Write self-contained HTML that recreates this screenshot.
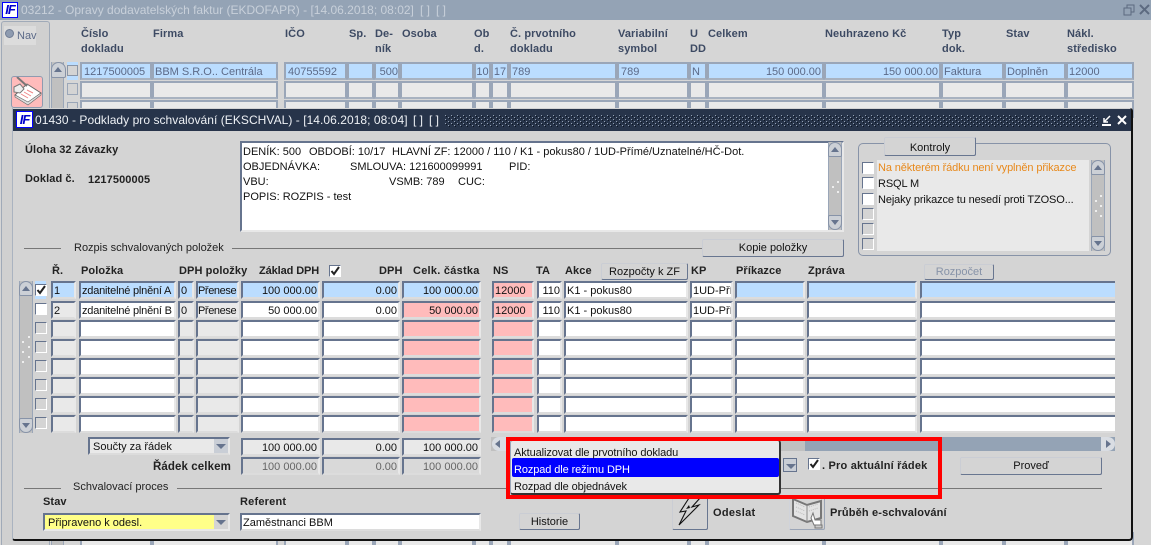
<!DOCTYPE html>
<html><head><meta charset="utf-8">
<style>
html,body{margin:0;padding:0;width:1151px;height:545px;overflow:hidden}
body{background:#d6d6d6;font:11px/18px "Liberation Sans",Arial,sans-serif;color:#111}
div,svg,span{position:absolute;box-sizing:border-box}
#root{left:0;top:0;width:1151px;height:545px;overflow:hidden}
.t{white-space:nowrap}
.h{font-weight:bold;white-space:nowrap;color:#222;letter-spacing:.1px}
.bh{font-weight:bold;white-space:nowrap;color:#3d4a63;line-height:15px;letter-spacing:.1px}
.bc{height:18px;border:2px solid #9aa6b8;border-bottom-color:#a8b2c0;background:#e9e9e9;color:#5c6a88;white-space:nowrap;padding:0 1px;line-height:17px;overflow:hidden}
.bb{background:#bbddff}
.r{text-align:right}
.c{height:18px;border:2px solid;border-color:#66748e #e8e8e8 #dcdcdc #66748e;white-space:nowrap;overflow:hidden;padding:0 1px;line-height:17px}
.n{letter-spacing:-.2px}
.m{letter-spacing:-.4px;padding:0}
.w{background:#fff}.g{background:#e9e9e9}.p{background:#ffbbbb}.b{background:#bbddff}.d{background:#d9d9d9;color:#666}
.k1{left:51px;width:25px}.k2{left:79px;width:97px}.k3{left:178px;width:16px}.k4{left:196px;width:43px}.k5{left:241px;width:79px}.k6{left:322px;width:78px}.k7{left:402px;width:79px}.k8{left:492px;width:42px}.k9{left:537px;width:25px}.k10{left:564px;width:124px}.k11{left:690px;width:43px}.k12{left:735px;width:70px}.k13{left:807px;width:110px}.k14{left:920px;width:195px}
.cb{left:35px;width:12px;height:12px;border:1px solid;border-color:#66748e #fff #fff #66748e;background:#d4d4d4}
.cw{background:#fff}
.btn{border:1px solid;border-color:#e8e8e8 #66748e #66748e #e8e8e8;border-radius:2px;background:#d4d4d4;text-align:center;white-space:nowrap;outline:1px solid rgba(110,125,150,.25);outline-offset:-1px}
.sb{background:#c0c0c0;border-left:1px solid #9aa6b8;border-right:1px solid #9aa6b8}
.ub,.db{left:-1px;width:15px;height:15px;background:#ccd0d6;border:1px solid #8793a8}
.ub{top:0;border-radius:8px 8px 2px 2px}.db{bottom:0;border-radius:2px 2px 8px 8px}
.ub:after,.db:after{content:"";position:absolute;left:2px;top:4px;border:4px solid transparent}
.ub:after{border-bottom:5px solid #66748e;border-top:0}
.db:after{border-top:5px solid #66748e;border-bottom:0}
.dot{width:2px;height:2px;background:#eee}
.ln{height:1px;background:#777}
.arr{width:14px;height:14px;background:#c9ced6}
.arr:after{content:"";position:absolute;left:2px;top:5px;border:5px solid transparent;border-top:5px solid #66748e;border-bottom:0}
</style></head>
<body>
<div id="root">
<!-- background window -->
<div style="left:0;top:0;width:1151px;height:20px;background:#94a3b5"></div>
<div style="left:2px;top:2px;width:16px;height:16px;background:#fff;border:1px solid #00f;color:#00c;font:italic bold 13px/14px 'Liberation Sans';text-align:center;letter-spacing:-1px">IF</div>
<div class="t" style="left:21px;top:2px;color:#c8d0da;font-size:12px;line-height:16px">03212 - Opravy dodavatelských faktur (EKDOFAPR) - [14.06.2018; 08:02]</div>
<div class="t" style="left:420px;top:2px;color:#c8d0da;font-size:12px;line-height:16px">[ ]</div>
<div class="t" style="left:436px;top:2px;color:#c8d0da;font-size:12px;line-height:16px">[ ]</div>
<svg style="left:1121px;top:3px" width="30" height="13"><path d="M3 5h7v7H3zM6 5V2h7v7h-3" fill="none" stroke="#5c6a80"/><path d="M19 2l9 9M28 2l-9 9" stroke="#5c6a80" stroke-width="2"/></svg>
<div style="left:1px;top:21px;width:49px;height:530px;border:1px solid #a0aab8;border-bottom:0;border-radius:3px 3px 0 0;background:#d0d0d0"></div>
<div style="left:4px;top:26px;width:32px;height:19px;background:#dcdcdc"></div>
<div style="left:5px;top:29px;width:9px;height:9px;border-radius:50%;background:#8e9bb0;border:1px solid #6f7c94"></div>
<div class="t" style="left:17px;top:27px;color:#5c6a88">Nav</div>
<div class="sb" style="left:51px;top:62px;width:13px;height:490px"><div class="ub" style="height:16px"></div></div>
<div style="left:67px;top:62px;width:11px;height:18px;background:#bbddff"></div>
<div style="left:67px;top:65px;width:11px;height:11px;background:#d4d4d4;border:1px solid #8a96a8"></div>
<div style="left:67px;top:83px;width:11px;height:12px;background:#d4d4d4;border:1px solid #9aa6b8"></div>
<div style="left:67px;top:102px;width:11px;height:12px;background:#d4d4d4;border:1px solid #9aa6b8"></div>
<div style="left:11px;top:76px;width:32px;height:32px;background:#ffbbbb;border:1px solid #8f9bb0;border-radius:3px"></div>
<svg style="left:12px;top:77px" width="30" height="30"><path d="M15 7l14 9-13 10-13-8z" fill="#fff" stroke="#666"/><path d="M16 25l13-9v2L16 28 3 20v-2z" fill="#ddd" stroke="#666" stroke-width=".6"/><path d="M9 17l7 4M12 15l7 4M15 13l6 3" stroke="#e88"/><path d="M5 0l10 9" stroke="#777" stroke-width="2"/><path d="M2 10l6-3 4 5-4 4-6-1z" fill="#eee" stroke="#777"/></svg>

<div class="bh" style="left:81px;top:27px">Číslo<br>dokladu</div>
<div class="bh" style="left:153px;top:27px">Firma</div>
<div class="bh" style="left:285px;top:27px">IČO</div>
<div class="bh" style="left:349px;top:27px">Sp.</div>
<div class="bh" style="left:375px;top:27px">De-<br>ník</div>
<div class="bh" style="left:402px;top:27px">Osoba</div>
<div class="bh" style="left:474px;top:27px">Ob<br>d.</div>
<div class="bh" style="left:510px;top:27px">Č. prvotního<br>dokladu</div>
<div class="bh" style="left:618px;top:27px">Variabilní<br>symbol</div>
<div class="bh" style="left:690px;top:27px">U<br>DD</div>
<div class="bh" style="left:708px;top:27px">Celkem</div>
<div class="bh" style="left:825px;top:27px">Neuhrazeno Kč</div>
<div class="bh" style="left:942px;top:27px">Typ<br>dok.</div>
<div class="bh" style="left:1006px;top:27px">Stav</div>
<div class="bh" style="left:1067px;top:27px">Nákl.<br>středisko</div>

<div class="bc bb" style="left:80px;top:62px;width:72px;padding-left:2px">1217500005</div>
<div class="bc bb" style="left:152px;top:62px;width:126px">BBM S.R.O.. Centrála</div>
<div class="bc bb" style="left:284px;top:62px;width:63px;padding-left:2px">40755592</div>
<div class="bc bb" style="left:347px;top:62px;width:27px"></div>
<div class="bc bb r" style="left:374px;top:62px;width:26px;padding:0">500</div>
<div class="bc bb" style="left:400px;top:62px;width:74px"></div>
<div class="bc bb" style="left:474px;top:62px;width:17px;padding:0;text-align:center">10</div>
<div class="bc bb" style="left:491px;top:62px;width:18px;padding:0;text-align:center">17</div>
<div class="bc bb" style="left:509px;top:62px;width:108px">789</div>
<div class="bc bb" style="left:617px;top:62px;width:72px;padding-left:2px">789</div>
<div class="bc bb" style="left:689px;top:62px;width:18px">N</div>
<div class="bc bb r" style="left:707px;top:62px;width:117px">150 000.00</div>
<div class="bc bb r" style="left:824px;top:62px;width:117px">150 000.00</div>
<div class="bc bb" style="left:941px;top:62px;width:63px">Faktura</div>
<div class="bc bb" style="left:1004px;top:62px;width:62px">Doplněn</div>
<div class="bc bb" style="left:1066px;top:62px;width:68px">12000</div>

<div class="bc" style="left:80px;top:81px;width:72px"></div><div class="bc" style="left:152px;top:81px;width:126px"></div><div class="bc" style="left:284px;top:81px;width:63px"></div><div class="bc" style="left:347px;top:81px;width:27px"></div><div class="bc" style="left:374px;top:81px;width:26px"></div><div class="bc" style="left:400px;top:81px;width:74px"></div><div class="bc" style="left:474px;top:81px;width:17px"></div><div class="bc" style="left:491px;top:81px;width:18px"></div><div class="bc" style="left:509px;top:81px;width:108px"></div><div class="bc" style="left:617px;top:81px;width:72px"></div><div class="bc" style="left:689px;top:81px;width:18px"></div><div class="bc" style="left:707px;top:81px;width:117px"></div><div class="bc" style="left:824px;top:81px;width:117px"></div><div class="bc" style="left:941px;top:81px;width:63px"></div><div class="bc" style="left:1004px;top:81px;width:62px"></div><div class="bc" style="left:1066px;top:81px;width:68px"></div>
<div class="bc" style="left:80px;top:100px;width:72px"></div><div class="bc" style="left:152px;top:100px;width:126px"></div><div class="bc" style="left:284px;top:100px;width:63px"></div><div class="bc" style="left:347px;top:100px;width:27px"></div><div class="bc" style="left:374px;top:100px;width:26px"></div><div class="bc" style="left:400px;top:100px;width:74px"></div><div class="bc" style="left:474px;top:100px;width:17px"></div><div class="bc" style="left:491px;top:100px;width:18px"></div><div class="bc" style="left:509px;top:100px;width:108px"></div><div class="bc" style="left:617px;top:100px;width:72px"></div><div class="bc" style="left:689px;top:100px;width:18px"></div><div class="bc" style="left:707px;top:100px;width:117px"></div><div class="bc" style="left:824px;top:100px;width:117px"></div><div class="bc" style="left:941px;top:100px;width:63px"></div><div class="bc" style="left:1004px;top:100px;width:62px"></div><div class="bc" style="left:1066px;top:100px;width:68px"></div>
<div class="bc" style="left:80px;top:532px;width:72px"></div><div class="bc" style="left:152px;top:532px;width:126px"></div><div class="bc" style="left:284px;top:532px;width:63px"></div><div class="bc" style="left:347px;top:532px;width:27px"></div><div class="bc" style="left:374px;top:532px;width:26px"></div><div class="bc" style="left:400px;top:532px;width:74px"></div><div class="bc" style="left:474px;top:532px;width:17px"></div><div class="bc" style="left:491px;top:532px;width:18px"></div><div class="bc" style="left:509px;top:532px;width:108px"></div><div class="bc" style="left:617px;top:532px;width:72px"></div><div class="bc" style="left:689px;top:532px;width:18px"></div><div class="bc" style="left:707px;top:532px;width:117px"></div><div class="bc" style="left:824px;top:532px;width:117px"></div><div class="bc" style="left:941px;top:532px;width:63px"></div><div class="bc" style="left:1004px;top:532px;width:62px"></div><div class="bc" style="left:1066px;top:532px;width:68px"></div>

<!-- modal -->
<div style="left:12px;top:108px;width:1121px;height:433px;background:#d4d4d4;border-right:2px solid #111;border-bottom:2px solid #111;border-left:1px solid #aab3c0;border-radius:0 3px 4px 3px"></div>
<div style="left:13px;top:109px;width:1118px;height:22px;background:#27344a"></div>
<div style="left:16px;top:111px;width:17px;height:17px;background:#fff;border:1px solid #00f;color:#00c;font:italic bold 13px/15px 'Liberation Sans';text-align:center;letter-spacing:-1px">IF</div>
<div class="t" style="left:35px;top:112px;color:#eef1f5;font-size:12px;line-height:16px;letter-spacing:.05px">01430 - Podklady pro schvalování (EKSCHVAL) - [14.06.2018; 08:04]</div>
<div class="t" style="left:413px;top:112px;color:#eef1f5;font-size:12px;line-height:16px">[ ]</div>
<div class="t" style="left:429px;top:112px;color:#eef1f5;font-size:12px;line-height:16px">[ ]</div>
<svg style="left:445px;top:115px" width="653" height="12"><defs><pattern id="pt" width="6" height="4" patternUnits="userSpaceOnUse"><rect width="1" height="1" x="0" y="0" fill="#93a0b2"/><rect width="1" height="1" x="1" y="1" fill="#0e1622"/><rect width="1" height="1" x="3" y="2" fill="#93a0b2"/><rect width="1" height="1" x="4" y="3" fill="#0e1622"/></pattern></defs><rect width="653" height="12" fill="url(#pt)"/></svg>
<svg style="left:1100px;top:113px" width="30" height="14"><path d="M2 12h9" stroke="#fff" stroke-width="2"/><path d="M10 3L4 9M4 5v4h4" stroke="#fff" fill="none" stroke-width="1.5"/><path d="M18 3l8 8M26 3l-8 8" stroke="#fff" stroke-width="2"/></svg>

<div class="h" style="left:25px;top:141px">Úloha 32 Závazky</div>
<div class="h" style="left:25px;top:170px">Doklad č.</div>
<div class="h" style="left:88px;top:171px">1217500005</div>

<div style="left:240px;top:141px;width:604px;height:91px;background:#fff;border:2px solid;border-color:#66748e #e8e8e8 #e8e8e8 #66748e"></div>
<div class="t" style="left:243px;top:143px">DENÍK: 500</div>
<div class="t" style="left:309px;top:143px">OBDOBÍ: 10/17</div>
<div class="t" style="left:392px;top:143px">HLAVNÍ ZF: 12000 / 110 / K1 - pokus80 / 1UD-Přímé/Uznatelné/HČ-Dot.</div>
<div class="t" style="left:243px;top:158px">OBJEDNÁVKA:</div>
<div class="t" style="left:350px;top:158px">SMLOUVA: 121600099991</div>
<div class="t" style="left:509px;top:158px">PID:</div>
<div class="t" style="left:243px;top:173px">VBU:</div>
<div class="t" style="left:389px;top:173px">VSMB: 789</div>
<div class="t" style="left:458px;top:173px">CUC:</div>
<div class="t" style="left:243px;top:188px">POPIS: ROZPIS - test</div>
<div class="sb" style="left:828px;top:142px;width:14px;height:88px"><div class="ub" style="width:14px"></div><div class="db" style="width:14px"></div><div class="dot" style="left:8px;top:39px"></div><div class="dot" style="left:3px;top:44px"></div><div class="dot" style="left:8px;top:49px"></div></div>

<div style="left:858px;top:143px;width:253px;height:113px;border:1px solid #8793a8;border-radius:5px"></div>
<div class="btn" style="left:884px;top:137px;width:92px;height:19px;line-height:20px">Kontroly</div>
<div style="left:877px;top:160px;width:212px;height:91px;background:#e9e9e9"></div>
<div class="t" style="left:878px;top:159px;color:#e8891c;letter-spacing:-.12px">Na některém řádku není vyplněn přikazce</div>
<div class="t" style="left:878px;top:175px;letter-spacing:-.12px">RSQL M</div>
<div class="t" style="left:878px;top:191px;letter-spacing:-.12px">Nejaky prikazce tu nesedí proti TZOSO...</div>
<div class="cb cw" style="left:862px;top:162px"></div><div class="cb cw" style="left:862px;top:177px"></div><div class="cb cw" style="left:862px;top:193px"></div><div class="cb" style="left:862px;top:208px"></div><div class="cb" style="left:862px;top:223px"></div><div class="cb" style="left:862px;top:238px"></div>
<div class="sb" style="left:1091px;top:160px;width:14px;height:91px"><div class="ub" style="width:14px"></div><div class="db" style="width:14px"></div><div class="dot" style="left:8px;top:35px"></div><div class="dot" style="left:3px;top:40px"></div><div class="dot" style="left:8px;top:45px"></div><div class="dot" style="left:3px;top:50px"></div><div class="dot" style="left:8px;top:55px"></div></div>

<div class="ln" style="left:24px;top:248px;width:37px"></div>
<div class="t" style="left:74px;top:239px;color:#222">Rozpis schvalovaných položek</div>
<div class="ln" style="left:232px;top:248px;width:470px"></div>
<div class="btn" style="left:702px;top:239px;width:142px;height:18px;line-height:16px">Kopie položky</div>

<div class="h" style="left:52px;top:262px">Ř.</div>
<div class="h" style="left:81px;top:262px">Položka</div>
<div class="h" style="left:179px;top:262px">DPH položky</div>
<div class="h" style="left:259px;top:262px;letter-spacing:-.1px">Základ DPH</div>
<div class="cb cw" style="left:329px;top:265px"></div>
<svg style="left:329px;top:265px" width="12" height="12"><path d="M2.5 6l2.5 3 5-7" fill="none" stroke="#222" stroke-width="2"/></svg>
<div class="h" style="left:379px;top:262px">DPH</div>
<div class="h" style="left:413px;top:262px;letter-spacing:.25px">Celk. částka</div>
<div class="h" style="left:493px;top:262px">NS</div>
<div class="h" style="left:536px;top:262px">TA</div>
<div class="h" style="left:565px;top:262px">Akce</div>
<div class="btn" style="left:601px;top:263px;width:87px;height:17px;line-height:16px">Rozpočty k ZF</div>
<div class="h" style="left:691px;top:262px">KP</div>
<div class="h" style="left:736px;top:262px">Příkazce</div>
<div class="h" style="left:808px;top:262px">Zpráva</div>
<div class="btn" style="left:924px;top:264px;width:70px;height:16px;line-height:15px;color:#8793a8">Rozpočet</div>

<div class="sb" style="left:19px;top:281px;width:14px;height:152px"><div class="ub" style="width:14px"></div><div class="db" style="width:14px"></div><div class="dot" style="left:8px;top:55px"></div><div class="dot" style="left:2px;top:60px"></div><div class="dot" style="left:8px;top:65px"></div><div class="dot" style="left:2px;top:70px"></div><div class="dot" style="left:8px;top:75px"></div><div class="dot" style="left:2px;top:80px"></div></div>

<!-- row 1 -->
<div style="left:35px;top:281px;width:11px;height:18px;background:#bbddff"></div>
<div class="cb cw" style="top:284px"></div>
<svg style="left:35px;top:284px" width="12" height="12"><path d="M2.5 6l2.5 3 5-7" fill="none" stroke="#222" stroke-width="2"/></svg>
<div class="c b k1" style="top:281px">1</div><div class="c b k2 n" style="top:281px">zdanitelné plnění A</div><div class="c b k3" style="top:281px">0</div><div class="c b k4 m" style="top:281px">Přenese</div><div class="c b k5 r" style="top:281px">100 000.00</div><div class="c b k6 r" style="top:281px">0.00</div><div class="c b k7 r" style="top:281px">100 000.00</div><div class="c p k8" style="top:281px">12000</div><div class="c w k9 r" style="top:281px;padding:0">110</div><div class="c w k10" style="top:281px">K1 - pokus80</div><div class="c w k11" style="top:281px">1UD-Přím</div><div class="c b k12" style="top:281px"></div><div class="c b k13" style="top:281px"></div><div class="c b k14" style="top:281px;border-right:0"></div>
<!-- row 2 -->
<div class="cb cw" style="top:303px"></div>
<div class="c g k1" style="top:301px">2</div><div class="c w k2 n" style="top:301px">zdanitelné plnění B</div><div class="c g k3" style="top:301px">0</div><div class="c g k4 m" style="top:301px">Přenese</div><div class="c w k5 r" style="top:301px">50 000.00</div><div class="c w k6 r" style="top:301px">0.00</div><div class="c p k7 r" style="top:301px">50 000.00</div><div class="c p k8" style="top:301px">12000</div><div class="c w k9 r" style="top:301px;padding:0">110</div><div class="c w k10" style="top:301px">K1 - pokus80</div><div class="c w k11" style="top:301px">1UD-Přím</div><div class="c w k12" style="top:301px"></div><div class="c w k13" style="top:301px"></div><div class="c w k14" style="top:301px;border-right:0"></div>
<!-- row 3 -->
<div class="cb" style="top:322px"></div><div class="c g k1" style="top:320px"></div><div class="c w k2" style="top:320px"></div><div class="c g k3" style="top:320px"></div><div class="c g k4" style="top:320px"></div><div class="c w k5" style="top:320px"></div><div class="c w k6" style="top:320px"></div><div class="c p k7" style="top:320px"></div><div class="c p k8" style="top:320px"></div><div class="c w k9" style="top:320px"></div><div class="c w k10" style="top:320px"></div><div class="c w k11" style="top:320px"></div><div class="c w k12" style="top:320px"></div><div class="c w k13" style="top:320px"></div><div class="c w k14" style="top:320px;border-right:0"></div>
<!-- row 4 -->
<div class="cb" style="top:341px"></div><div class="c g k1" style="top:339px"></div><div class="c w k2" style="top:339px"></div><div class="c g k3" style="top:339px"></div><div class="c g k4" style="top:339px"></div><div class="c w k5" style="top:339px"></div><div class="c w k6" style="top:339px"></div><div class="c p k7" style="top:339px"></div><div class="c p k8" style="top:339px"></div><div class="c w k9" style="top:339px"></div><div class="c w k10" style="top:339px"></div><div class="c w k11" style="top:339px"></div><div class="c w k12" style="top:339px"></div><div class="c w k13" style="top:339px"></div><div class="c w k14" style="top:339px;border-right:0"></div>
<!-- row 5 -->
<div class="cb" style="top:360px"></div><div class="c g k1" style="top:358px"></div><div class="c w k2" style="top:358px"></div><div class="c g k3" style="top:358px"></div><div class="c g k4" style="top:358px"></div><div class="c w k5" style="top:358px"></div><div class="c w k6" style="top:358px"></div><div class="c p k7" style="top:358px"></div><div class="c p k8" style="top:358px"></div><div class="c w k9" style="top:358px"></div><div class="c w k10" style="top:358px"></div><div class="c w k11" style="top:358px"></div><div class="c w k12" style="top:358px"></div><div class="c w k13" style="top:358px"></div><div class="c w k14" style="top:358px;border-right:0"></div>
<!-- row 6 -->
<div class="cb" style="top:379px"></div><div class="c g k1" style="top:377px"></div><div class="c w k2" style="top:377px"></div><div class="c g k3" style="top:377px"></div><div class="c g k4" style="top:377px"></div><div class="c w k5" style="top:377px"></div><div class="c w k6" style="top:377px"></div><div class="c p k7" style="top:377px"></div><div class="c p k8" style="top:377px"></div><div class="c w k9" style="top:377px"></div><div class="c w k10" style="top:377px"></div><div class="c w k11" style="top:377px"></div><div class="c w k12" style="top:377px"></div><div class="c w k13" style="top:377px"></div><div class="c w k14" style="top:377px;border-right:0"></div>
<!-- row 7 -->
<div class="cb" style="top:398px"></div><div class="c g k1" style="top:396px"></div><div class="c w k2" style="top:396px"></div><div class="c g k3" style="top:396px"></div><div class="c g k4" style="top:396px"></div><div class="c w k5" style="top:396px"></div><div class="c w k6" style="top:396px"></div><div class="c p k7" style="top:396px"></div><div class="c p k8" style="top:396px"></div><div class="c w k9" style="top:396px"></div><div class="c w k10" style="top:396px"></div><div class="c w k11" style="top:396px"></div><div class="c w k12" style="top:396px"></div><div class="c w k13" style="top:396px"></div><div class="c w k14" style="top:396px;border-right:0"></div>
<!-- row 8 -->
<div class="cb" style="top:417px"></div><div class="c g k1" style="top:415px"></div><div class="c w k2" style="top:415px"></div><div class="c g k3" style="top:415px"></div><div class="c g k4" style="top:415px"></div><div class="c w k5" style="top:415px"></div><div class="c w k6" style="top:415px"></div><div class="c p k7" style="top:415px"></div><div class="c p k8" style="top:415px"></div><div class="c w k9" style="top:415px"></div><div class="c w k10" style="top:415px"></div><div class="c w k11" style="top:415px"></div><div class="c w k12" style="top:415px"></div><div class="c w k13" style="top:415px"></div><div class="c w k14" style="top:415px;border-right:0"></div>

<!-- sums -->
<div class="c g" style="left:88px;top:437px;width:142px;padding-left:3px">Součty za řádek</div>
<div class="arr" style="left:214px;top:439px"></div>
<div class="c g k5 r" style="top:438px">100 000.00</div><div class="c g k6 r" style="top:438px">0.00</div><div class="c g k7 r" style="top:438px">100 000.00</div>
<div class="h" style="left:153px;top:458px;font-size:11.5px">Řádek celkem</div>
<div class="c d k5 r" style="top:457px">100 000.00</div><div class="c d k6 r" style="top:457px">0.00</div><div class="c d k7 r" style="top:457px">100 000.00</div>

<div style="left:491px;top:437px;width:314px;height:14px;background:#c0c0c0"></div>
<div style="left:805px;top:437px;width:310px;height:14px;background:#94a3b5"></div>
<div style="left:492px;top:437px;width:14px;height:14px;background:#d9dde3;border-radius:7px 0 0 7px"></div>
<div style="left:495px;top:440px;border:4px solid transparent;border-right:5px solid #66748e;border-left:0"></div>
<div style="left:1101px;top:437px;width:14px;height:14px;background:#d9dde3;border-radius:0 7px 7px 0"></div>
<div style="left:1106px;top:440px;border:4px solid transparent;border-left:5px solid #66748e;border-right:0"></div>

<div class="arr" style="left:783px;top:458px;border:1px solid #66748e"></div>
<div class="cb cw" style="left:808px;top:458px"></div>
<svg style="left:808px;top:458px" width="12" height="12"><path d="M2.5 6l2.5 3 5-7" fill="none" stroke="#222" stroke-width="2"/></svg>
<div class="h" style="left:822px;top:457px;letter-spacing:.2px">. Pro aktuální řádek</div>
<div class="btn" style="left:960px;top:457px;width:142px;height:18px;line-height:17px">Proveď</div>

<div class="ln" style="left:24px;top:488px;width:37px"></div>
<div class="t" style="left:73px;top:478px;color:#222">Schvalovací proces</div>
<div class="ln" style="left:177px;top:488px;width:925px"></div>

<div class="h" style="left:43px;top:493px">Stav</div>
<div class="h" style="left:240px;top:493px;letter-spacing:.2px">Referent</div>
<div class="c" style="left:43px;top:513px;width:187px;height:18px;background:#ffff88;padding-left:3px;border-color:#66748e #e8e8e8 #e8e8e8 #66748e">Připraveno k odesl.</div>
<div class="arr" style="left:214px;top:515px;background:#d4d4d4"></div>
<div class="c w" style="left:240px;top:513px;width:241px">Zaměstnanci BBM</div>
<div class="btn" style="left:519px;top:513px;width:61px;height:17px;line-height:17px">Historie</div>

<div class="btn" style="left:672px;top:495px;width:36px;height:35px"></div>
<svg style="left:672px;top:495px" width="36" height="35"><path d="M17 3L8 17l6-1-7 14 20-20-7 2 8-9" fill="none" stroke="#111" stroke-width="1.1"/><path d="M14 14l3-4 1 3z" fill="#111"/></svg>
<div class="h" style="left:713px;top:504px;letter-spacing:.3px">Odeslat</div>
<div class="btn" style="left:789px;top:495px;width:36px;height:35px;border-color:#f0f0f0 #aab3c0 #aab3c0 #f0f0f0"></div>
<svg style="left:789px;top:495px" width="36" height="35"><path d="M4 4l14 6 14-4v17l-14 4-14-6z" fill="#e4e4e4" stroke="#777" stroke-width="2"/><path d="M18 10v17" stroke="#888"/><path d="M7 8l9 4M7 12l9 4M7 16l9 4M20 12l9-3M20 16l9-3" stroke="#bbb" stroke-dasharray="1 1"/><path d="M24 18l2 7h6v5h-7l-3-7z" fill="#fff" stroke="#777"/><rect x="26" y="30" width="7" height="3" fill="#ccc" stroke="#777"/></svg>
<div class="h" style="left:830px;top:504px;letter-spacing:.15px">Průběh e-schvalování</div>

<!-- popup -->
<div style="left:510px;top:440px;width:271px;height:55px;background:#e9e9e9;border-right:2px solid #333;border-bottom:2px solid #333;border-top:1px solid #9aa6b8;border-left:1px solid #9aa6b8;border-radius:3px"></div>
<div style="left:512px;top:458px;width:267px;height:19px;background:#00f;border-radius:2px"></div>
<div class="t" style="left:514px;top:444px;letter-spacing:-.1px">Aktualizovat dle prvotního dokladu</div>
<div class="t" style="left:514px;top:461px;color:#fff;letter-spacing:-.1px">Rozpad dle režimu DPH</div>
<div class="t" style="left:514px;top:478px;letter-spacing:-.1px">Rozpad dle objednávek</div>

<!-- red highlight -->
<div style="left:506px;top:437px;width:436px;height:62px;border:4px solid #f00"></div>
</div>
</body></html>
